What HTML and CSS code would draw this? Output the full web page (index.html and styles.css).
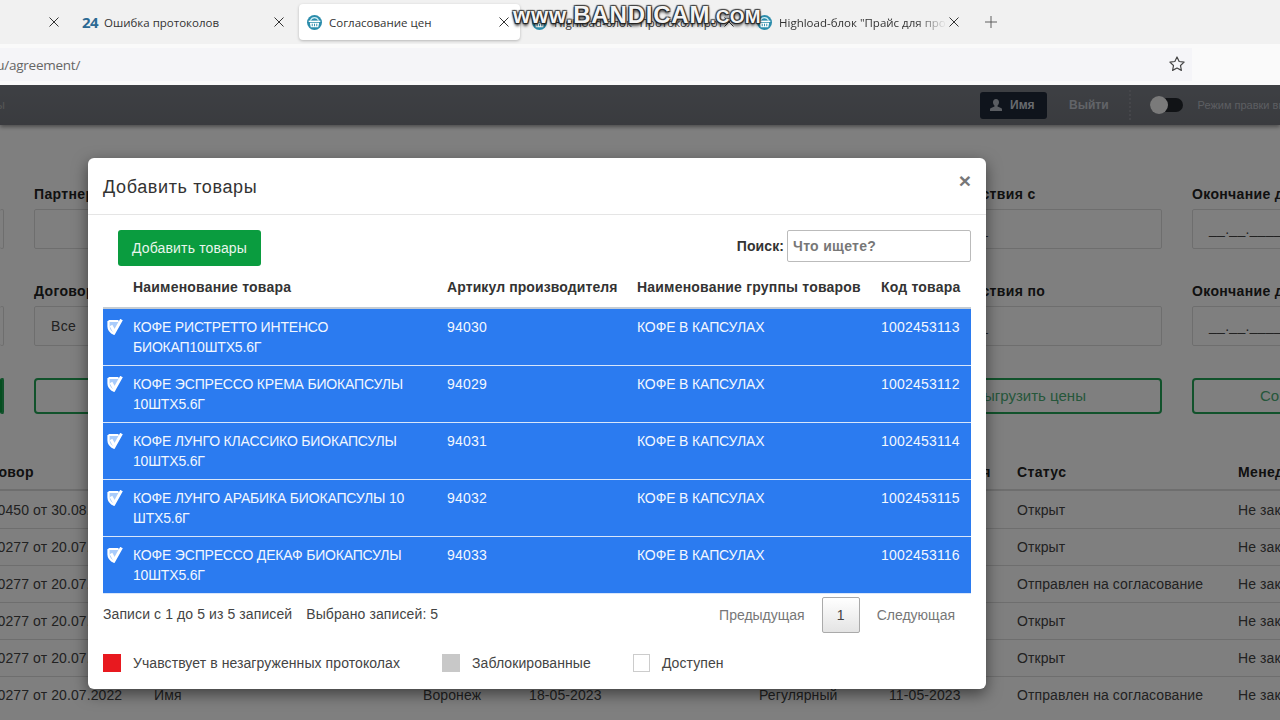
FILE: index.html
```html
<!DOCTYPE html>
<html lang="ru">
<head>
<meta charset="utf-8">
<title>Согласование цен</title>
<link rel="stylesheet" href="styles.css">
</head>
<body>
<div class="browser">
  <div class="tabstrip">
    <div class="tab tab-first"><svg class="tab-close" viewBox="0 0 14 10"><use href="#close"/></svg></div>
    <div class="tab">
      <span class="favicon-num">24</span>
      <span class="tab-title">Ошибка протоколов</span>
      <svg class="tab-close" viewBox="0 0 14 10"><use href="#close"/></svg>
    </div>
    <div class="tab tab-active">
      <svg class="favicon" viewBox="0 0 16 16"><use href="#basket"/></svg>
      <span class="tab-title">Согласование цен</span>
      <svg class="tab-close" viewBox="0 0 14 10"><use href="#close"/></svg>
    </div>
    <div class="tab">
      <svg class="favicon" viewBox="0 0 16 16"><use href="#basket"/></svg>
      <span class="tab-title">Highload-блок "Протокол протоколов"</span>
      <svg class="tab-close" viewBox="0 0 14 10"><use href="#close"/></svg>
    </div>
    <div class="tab">
      <svg class="favicon" viewBox="0 0 16 16"><use href="#basket"/></svg>
      <span class="tab-title tab-fade">Highload-блок "Прайс для протоколов"</span>
      <svg class="tab-close" viewBox="0 0 14 10"><use href="#close"/></svg>
    </div>
    <svg class="tab-new" viewBox="0 0 14 14"><path d="M7 0v14M0 7h14" stroke="#555" stroke-width="1.100"/></svg>
  </div>
  <div class="addressbar">
    <div class="url">
      <span class="url-text">ru/agreement/</span>
      <svg class="star" viewBox="0 0 20 20"><path d="M10 2.200l2.400 5 5.500.7-4 3.800 1 5.400-4.900-2.600-4.900 2.600 1-5.400-4-3.800 5.500-.7z" fill="none" stroke="#444" stroke-width="1.300" stroke-linejoin="round"/></svg>
    </div>
  </div>
</div>

<div class="page">
  <header class="topbar">
    <span class="topbar-left">Цены</span>
    <div class="topbar-right">
      <span class="user-btn">
        <svg class="user-icon" viewBox="0 0 14 14"><path d="M7 1c1.900 0 3 1.400 3 3.300 0 1.300-.6 2.600-1.500 3.200v1.100l3.500 1.500c.7.300 1 .8 1 1.400v1.500H1v-1.500c0-.6.3-1.100 1-1.400l3.500-1.500V7.500C4.600 6.900 4 5.600 4 4.300 4 2.400 5.100 1 7 1z" fill="#b5bac4"/></svg>
        Имя
      </span>
      <span class="logout">Выйти</span>
      <span class="dots"></span>
      <span class="switch"><span class="knob"></span></span>
      <span class="edit-mode">Режим правки выкл</span>
    </div>
  </header>

  <section class="filters">
    <div class="f-cell"><label class="f-label">&nbsp;</label><div class="f-input f-clip"></div></div>
    <div class="f-cell"><label class="f-label">Партнер</label><div class="f-input"></div></div>
    <div class="f-cell"></div>
    <div class="f-cell"><label class="f-label">Начало действия с</label><div class="f-input">__.__.____</div></div>
    <div class="f-cell"><label class="f-label">Окончание действия с</label><div class="f-input">__.__.____</div></div>

    <div class="f-cell"><label class="f-label">&nbsp;</label><div class="f-input f-clip"></div></div>
    <div class="f-cell"><label class="f-label">Договор</label><div class="f-input">Все</div></div>
    <div class="f-cell"></div>
    <div class="f-cell"><label class="f-label">Начало действия по</label><div class="f-input">__.__.____</div></div>
    <div class="f-cell"><label class="f-label">Окончание действия по</label><div class="f-input">__.__.____</div></div>

    <div class="f-btn f-btn-fill"></div>
    <div class="f-btn">Найти</div>
    <div></div>
    <div class="f-btn">Выгрузить цены</div>
    <div class="f-btn">Согласовать цены</div>
  </section>

  <section class="grid">
    <div class="g-row g-head">
      <span>Договор</span><span>Партнер</span><span>Регион</span><span>Начало</span><span>Тип</span><span>Дата создания</span><span>Статус</span><span>Менеджер</span>
    </div>
    <div class="g-row"><span>ДС-0450 от 30.08.2022</span><span>Имя</span><span>Воронеж</span><span>18-05-2023</span><span>Регулярный</span><span>11-05-2023</span><span>Открыт</span><span>Не закреплен</span></div>
    <div class="g-row"><span>ДС-0277 от 20.07.2022</span><span>Имя</span><span>Воронеж</span><span>18-05-2023</span><span>Регулярный</span><span>11-05-2023</span><span>Открыт</span><span>Не закреплен</span></div>
    <div class="g-row"><span>ДС-0277 от 20.07.2022</span><span>Имя</span><span>Воронеж</span><span>18-05-2023</span><span>Регулярный</span><span>11-05-2023</span><span>Отправлен на согласование</span><span>Не закреплен</span></div>
    <div class="g-row"><span>ДС-0277 от 20.07.2022</span><span>Имя</span><span>Воронеж</span><span>18-05-2023</span><span>Регулярный</span><span>11-05-2023</span><span>Открыт</span><span>Не закреплен</span></div>
    <div class="g-row"><span>ДС-0277 от 20.07.2022</span><span>Имя</span><span>Воронеж</span><span>18-05-2023</span><span>Регулярный</span><span>11-05-2023</span><span>Открыт</span><span>Не закреплен</span></div>
    <div class="g-row"><span>ДС-0277 от 20.07.2022</span><span>Имя</span><span>Воронеж</span><span>18-05-2023</span><span>Регулярный</span><span>11-05-2023</span><span>Отправлен на согласование</span><span>Не закреплен</span></div>
  </section>

  <div class="backdrop"></div>

  <div class="modal">
    <div class="m-head">
      <h2 class="m-title">Добавить товары</h2>
      <span class="m-close">&times;</span>
    </div>
    <div class="m-body">
      <div class="m-toolbar">
        <button class="btn-add">Добавить товары</button>
        <div class="search"><b>Поиск:</b><span class="search-input">Что ищете?</span></div>
      </div>
      <div class="t-row t-head">
        <span></span><span>Наименование товара</span><span class="t-art">Артикул производителя</span><span>Наименование группы товаров</span><span>Код товара</span>
      </div>
      <div class="t-body">
        <div class="t-row t-sel">
          <svg class="check" viewBox="0 0 16 16"><use href="#check"/></svg>
          <span>КОФЕ РИСТРЕТТО ИНТЕНСО<br>БИОКАП10ШТХ5.6Г</span><span>94030</span><span>КОФЕ В КАПСУЛАХ</span><span>1002453113</span>
        </div>
        <div class="t-row t-sel">
          <svg class="check" viewBox="0 0 16 16"><use href="#check"/></svg>
          <span>КОФЕ ЭСПРЕССО КРЕМА БИОКАПСУЛЫ<br>10ШТХ5.6Г</span><span>94029</span><span>КОФЕ В КАПСУЛАХ</span><span>1002453112</span>
        </div>
        <div class="t-row t-sel">
          <svg class="check" viewBox="0 0 16 16"><use href="#check"/></svg>
          <span>КОФЕ ЛУНГО КЛАССИКО БИОКАПСУЛЫ<br>10ШТХ5.6Г</span><span>94031</span><span>КОФЕ В КАПСУЛАХ</span><span>1002453114</span>
        </div>
        <div class="t-row t-sel">
          <svg class="check" viewBox="0 0 16 16"><use href="#check"/></svg>
          <span>КОФЕ ЛУНГО АРАБИКА БИОКАПСУЛЫ 10<br>ШТХ5.6Г</span><span>94032</span><span>КОФЕ В КАПСУЛАХ</span><span>1002453115</span>
        </div>
        <div class="t-row t-sel">
          <svg class="check" viewBox="0 0 16 16"><use href="#check"/></svg>
          <span>КОФЕ ЭСПРЕССО ДЕКАФ БИОКАПСУЛЫ<br>10ШТХ5.6Г</span><span>94033</span><span>КОФЕ В КАПСУЛАХ</span><span>1002453116</span>
        </div>
      </div>
      <div class="m-foot">
        <div class="info"><span>Записи с 1 до 5 из 5 записей</span><span>Выбрано записей: 5</span></div>
        <div class="pager"><span>Предыдущая</span><span class="page-num">1</span><span>Следующая</span></div>
      </div>
      <div class="legend">
        <span class="swatch swatch-red"></span><span class="legend-text">Учавствует в незагруженных протоколах</span>
        <span class="swatch swatch-gray"></span><span class="legend-text">Заблокированные</span>
        <span class="swatch swatch-white"></span><span class="legend-text">Доступен</span>
      </div>
    </div>
  </div>
</div>

<div class="watermark"><span class="wm-small">www.</span><span class="wm-big">BANDICAM</span><span class="wm-com">.COM</span></div>

<svg class="defs" width="0" height="0">
  <defs>
    <symbol id="close" viewBox="0 0 14 10">
      <path d="M2.500.5l9 9M11.500.5l-9 9" stroke="#333" stroke-width="1" fill="none"/>
    </symbol>
    <symbol id="basket" viewBox="0 0 16 16">
      <circle cx="8" cy="8" r="8" fill="#2b8cab"/>
      <path d="M3.600 6C4.500 3.600 6 2.700 8 2.700S11.500 3.600 12.400 6" fill="none" stroke="#cfeef6" stroke-width="1.300"/>
      <path d="M1.800 6h12.400v1.500H1.800z" fill="#fff"/>
      <path d="M3 8.300h10l-1 4.700H4z" fill="#fff"/>
      <path d="M5.600 9.300v2.700M8 9.300v2.700M10.400 9.300v2.700" stroke="#2b8cab" stroke-width="1"/>
    </symbol>
    <symbol id="check" viewBox="0 0 16 16">
      <path d="M1.500 2H12.500L7.500 15C4 13.500 1.500 10.500 1.500 7.500z" fill="#a9ccfb"/>
      <path d="M1.500 2H11.500M1.500 2V7.500C1.500 10.500 4 13.500 7.500 15" fill="none" stroke="#fff" stroke-width="2.200" stroke-linejoin="round"/>
      <path d="M4 6.500L7.500 13 14.500 .6" fill="none" stroke="#fff" stroke-width="3"/>
    </symbol>
  </defs>
</svg>
</body>
</html>
```
FILE: styles.css
```css
* { box-sizing: border-box; }
html, body { margin: 0; width: 1280px; height: 720px; overflow: hidden; background: #fff; }
body { font-family: "Liberation Sans", Arial, sans-serif; font-size: 14px; color: #444; position: relative; }

/* browser chrome */
.browser { height: 85px; background: #fafafa; }
.tabstrip { height: 44px; background: #f1f1f1; display: flex; align-items: center; }
.tab { width: 225px; height: 36px; display: flex; align-items: center; flex: none; padding: 0 13px 0 8px; color: #333; font-family: "Open Sans", sans-serif; font-size: 11.500px; }
.tab-first { width: 74px; justify-content: flex-end; }
.tab-active { width: 221px; background: #fff; border-radius: 4px; box-shadow: 0 1px 3px rgba(0,0,0,.25); margin-right: 4px; padding-right: 9px; }
.tab-title { flex: 1; min-width: 0; overflow: hidden; white-space: nowrap; padding-left: 7px; }
.tab-fade { -webkit-mask-image: linear-gradient(90deg, #000 82%, transparent); mask-image: linear-gradient(90deg, #000 82%, transparent); }
.tab-close { width: 14px; height: 10px; flex: none; }
.favicon { width: 15px; height: 15px; flex: none; }
.favicon-num { font-family: "Open Sans", sans-serif; font-weight: 700; font-size: 15px; color: #2c6a94; width: 15px; flex: none; letter-spacing: -.5px; }
.tab-new { width: 12px; height: 12px; margin-left: 11px; flex: none; }
.addressbar { height: 41px; padding-top: 4px; }
.url { width: 1192px; height: 33px; background: #f5f5f8; display: flex; align-items: center; justify-content: space-between; padding-right: 5px; }
.url-text { font-family: "Open Sans", sans-serif; font-size: 13.500px; color: #666; margin-left: -9px; letter-spacing: -.25px; }
.star { width: 18px; height: 18px; margin: -1px 1px 0 0; }

/* page */
.page { position: relative; height: 635px; overflow: hidden; background: #fff; }
.topbar { height: 40px; background: linear-gradient(#7c8088, #74777e); box-shadow: 0 2px 4px rgba(0,0,0,.4); display: flex; align-items: center; justify-content: space-between; position: relative; }
.topbar-left { margin-left: -26px; color: #aaa; font-size: 12px; }
.topbar-right { display: flex; align-items: center; margin-right: -24px; width: 324px; flex: none; }
.user-btn { width: 67px; height: 27px; background: #1e2838; border-radius: 3px; color: #d0d4dc; font-size: 12px; font-weight: 700; display: flex; align-items: center; gap: 7px; padding-left: 9px; flex: none; }
.user-icon { width: 14px; height: 14px; }
.logout { color: #c4c8d0; font-size: 12px; font-weight: 700; margin-left: 22px; }
.dots { width: 0; height: 30px; border-left: 2px dotted #8a8d94; margin-left: 20px; }
.switch { width: 33px; height: 14px; background: #22262c; border-radius: 7px; margin-left: 19px; position: relative; flex: none; }
.knob { position: absolute; left: 0; top: -2px; width: 18px; height: 18px; border-radius: 50%; background: #f4f4f4; }
.edit-mode { color: #b8bcc4; font-size: 11px; margin-left: 15px; white-space: nowrap; }

.filters { display: grid; grid-template-columns: 4px 264px 540px 264px 264px; column-gap: 30px; row-gap: 32px; padding-top: 59px; width: 1456px; }
.f-label { display: block; height: 20px; line-height: 20px; font-weight: 700; color: #222; margin-bottom: 5px; letter-spacing: .35px; white-space: nowrap; }
.f-cell { min-width: 0; }
.f-input { height: 40px; border: 1px solid #ddd; border-radius: 2px; padding: 0 16px; line-height: 38px; color: #444; letter-spacing: .3px; white-space: nowrap; }
.f-clip { border-left: 0; padding: 0; }
.f-btn { height: 36px; border: 2px solid #22a557; border-radius: 4px; color: #4cae76; text-align: center; line-height: 32px; font-size: 15px; white-space: nowrap; }
.f-btn-fill { background: #0a9c3f; border-left: 0; }

.grid { width: 1500px; margin-left: -27px; margin-top: 39px; }
.g-row { display: grid; grid-template-columns: 181px 269px 106px 230px 130px 128px 221px 235px; height: 37px; align-items: center; border-top: 1px solid #ddd; color: #444; white-space: nowrap; letter-spacing: .1px; }
.g-row > span { min-width: 0; }
.g-head { border-top: 0; font-weight: 700; color: #222; letter-spacing: .35px; height: 38px; padding-top: 2px; border-bottom: 2px solid #ddd; }
.g-head > span:nth-child(6) { letter-spacing: 0; }
.g-head + .g-row { border-top: 0; }

.backdrop { position: absolute; inset: 0; background: rgba(0,0,0,.5); }

/* modal */
.modal { position: absolute; left: 88px; top: 73px; width: 898px; height: 531px; background: #fff; border-radius: 6px; box-shadow: 0 5px 15px rgba(0,0,0,.5); }
.m-head { height: 57px; border-bottom: 1px solid #e5e5e5; padding: 2px 15px 0; display: flex; justify-content: space-between; align-items: center; position: relative; }
.m-title { margin: 0; font-size: 18px; font-weight: 400; color: #333; letter-spacing: .62px; }
.m-close { font-size: 21px; font-weight: 700; color: #777; margin-top: -12px; }
.m-body { padding: 15px 15px 0; }
.m-toolbar { display: flex; justify-content: space-between; padding-left: 15px; height: 36px; }
.btn-add { width: 143px; height: 36px; background: #0a9c3f; color: #e8f6ec; border: 0; border-radius: 3px; font: 14px "Liberation Sans", Arial, sans-serif; letter-spacing: .15px; }
.search { display: flex; align-items: flex-start; gap: 3px; }
.search b { color: #333; line-height: 32px; letter-spacing: .1px; }
.search-input { width: 184px; height: 32px; border: 1px solid #bbb; border-radius: 2px; padding: 0 5px; line-height: 30px; color: #777; font-weight: 700; letter-spacing: .3px; }

.t-row { display: grid; grid-template-columns: 30px 314px 190px 244px 90px; }
.t-head { height: 43px; align-items: center; font-weight: 700; color: #333; letter-spacing: .2px; white-space: nowrap; padding: 3px 0 2px; border-bottom: 2px solid #c4ccd4; }
.t-art { letter-spacing: .1px; }
.t-sel { height: 57px; background: #2b7bf0; color: #f2f7ff; border-bottom: 1px solid #d8e6fb; padding-top: 8px; line-height: 20px; white-space: nowrap; }
.t-sel > span:nth-of-type(1) { letter-spacing: -.18px; }
.t-sel > span:nth-of-type(2), .t-sel > span:nth-of-type(4) { letter-spacing: .2px; }
.t-sel > span:nth-of-type(3) { letter-spacing: -.13px; }
.check { width: 16px; height: 16px; margin: 2px 0 0 4px; }
.m-foot { display: flex; justify-content: space-between; height: 45px; margin-top: 3px; }
.info { display: flex; gap: 14px; padding-top: 9px; line-height: 16px; color: #444; letter-spacing: .1px; }
.pager { display: flex; align-items: center; gap: 17px; color: #777; padding-right: 16px; height: 36px; }
.page-num { width: 38px; height: 36px; border: 1px solid #aaa; border-radius: 2px; background: linear-gradient(#fff, #e4e4e4); text-align: center; line-height: 34px; color: #444; }
.legend { display: flex; align-items: center; height: 18px; margin-top: 12px; }
.swatch { width: 18px; height: 18px; flex: none; }
.swatch-red { background: #e8191f; }
.swatch-gray { background: #c8c8c8; }
.swatch-white { width: 17px; background: #fff; border: 1px solid #ccc; }
.legend-text { margin: 0 42px 0 12px; color: #444; letter-spacing: .08px; }

.watermark { position: absolute; left: 513px; top: 1px; height: 30px; display: flex; align-items: baseline; font-family: "Liberation Sans", Arial, sans-serif; font-weight: 700; color: #f4f4f4; text-shadow: 1px 1px 1px #222, -1px 1px 1px #222, 1px -1px 1px #444, -1px -1px 1px #444, 0 3px 3px rgba(0,0,0,.7); white-space: nowrap; }
.wm-small { font-size: 22px; letter-spacing: .9px; }
.wm-big { font-size: 24px; letter-spacing: .8px; }
.wm-com { font-size: 19px; letter-spacing: .2px; }
.defs { position: absolute; }
```
